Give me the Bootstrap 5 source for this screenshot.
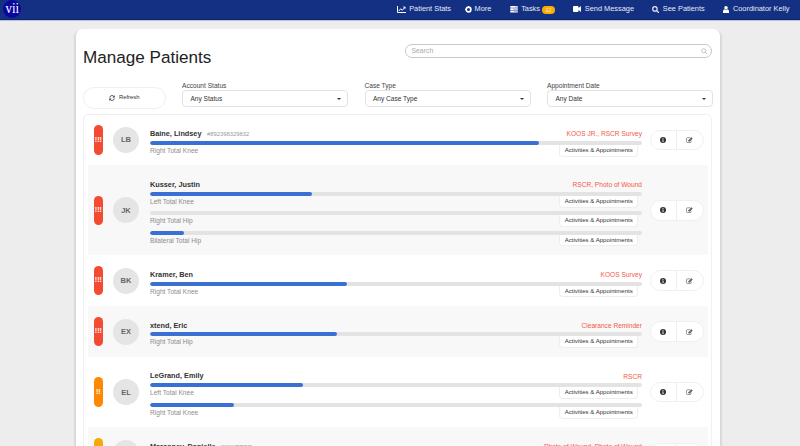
<!DOCTYPE html>
<html lang="en">
<head>
<meta charset="utf-8">
<meta name="viewport" content="width=device-width, initial-scale=1">
<title>Manage Patients</title>
<link href="https://cdn.jsdelivr.net/npm/bootstrap@5.3.0/dist/css/bootstrap.min.css" rel="stylesheet">
<style>
html,body{height:100%;overflow:hidden}
body{background:#ededed;font-family:"Liberation Sans",Arial,sans-serif;font-size:6.5px;line-height:1.2;color:#333}
svg{display:block;flex:none}
.topbar{height:21px;background:#143082;border-bottom:1px solid #b9c1da;box-shadow:inset 0 -1px #0c2470;padding:0 10.5px 1.5px 3px}
.topbar a{color:#e6eaf5;font-size:7.38px;text-decoration:none;white-space:nowrap;gap:3.5px;margin-left:18.3px}
.topbar a.nav-more{margin-left:13.5px;gap:3px}
.topbar a.nav-user{margin-left:18.8px}
.topbar .count{background:#fbab0a;color:#ffe9b8;font-size:5.6px;font-weight:400;width:13px;height:8.5px;margin-left:-1.5px;margin-top:1px;line-height:8.5px;padding:0}
.sheet{width:644px;height:417px;overflow:hidden;background:#fff;border-radius:7px 7px 0 0;padding:0 8px}
.sheet-shadow{width:644px;margin:8px 0 0 76px;border-radius:7px 7px 0 0;box-shadow:-2px 1px 1px #dadada,2px 1px 1px #dadada}
.title-row{height:52.500px;padding-top:15px}
.title-row h1{font-size:17.1px;line-height:20px;padding-top:4px;margin-left:-1px;color:#222;font-weight:400}
.search-box{width:307px;height:14px;border:1px solid #c8c8c8;border-radius:8px;color:#aaa;font-size:6.9px;padding:0 4px 0 5px;margin-right:-.4px}
.filters{height:32px}
.refresh{width:82.5px;height:21.5px;border:1px solid #f0f0f0;border-radius:11px;font-size:5.9px;margin:5.500px 16.5px 0 -1px;color:#333;gap:4px;flex:none}
.pick{width:166px;margin-right:16.5px;flex:none}
.pick label{font-size:6.6px;line-height:8px;color:#444;display:block;margin-bottom:.5px}
.pick .field{height:17px;border:1px solid #e2e2e2;border-radius:4px;padding:0 6px 0 7.5px;font-size:6.55px;color:#333}
.caret{border:2px solid transparent;border-top:2.6px solid #333;border-bottom:0}
.roster{width:629px;margin-left:-1px;height:400px;border:1px solid #f0f0f0;border-radius:5px;padding:0 3.5px}
.patient{padding:0 3.8px 0 6.2px}
.patient:nth-child(even){background:#f8f8f8}
.flagpill{width:9.3px;height:29.5px;border-radius:5px;background:#f34b31;color:#fff;font-weight:700;font-size:7px;margin-right:10px;flex:none}
.flagpill.mid{background:#ff8803}.flagpill.low{background:#f7a908}
.face{width:26px;height:26px;border-radius:50%;background:#e5e5e5;color:#666;font-weight:700;font-size:7.5px;margin-right:11px;flex:none}
.detail{width:492px;flex:none;padding-top:13.4px;margin-right:7.600px;align-self:stretch}
.who{height:13px}
.who b{font-size:7.3px;color:#333}
.who span{font-size:5.85px;color:#999;margin-left:5.5px}
.who em{font-style:normal;font-size:6.6px;color:#f25a45}
.track{height:4px;border-radius:2px;background:#e3e3e3;overflow:hidden}
.fill{height:4px;background:#3a6fd3;border-radius:2px}
.joint{height:15.45px;color:#8c8c8c;font-size:6.6px;line-height:11px;padding-right:3.5px}
.acts{width:79.5px;height:11.8px;border:1px solid #eee;border-top:0;border-radius:0 0 4px 4px;background:#fff;color:#333;font-size:6.07px;line-height:11.2px}
.duo{width:54px;height:20.5px;border:1px solid #f0f0f0;border-radius:11px;background:#fff;flex:none}
.duo span+span{border-left:1px solid #eee}
</style>
</head>
<body>
<svg width="0" height="0" class="position-absolute">
<symbol id="info" viewBox="0 0 12 12"><circle cx="6" cy="6" r="6" fill="#333"/><path d="M4.500 5h2.400v3.700h.8v1H4.400v-1h.8V6h-.7zM5.200 2.200h1.600v1.600H5.200z" fill="#fff"/></symbol>
<symbol id="edit" viewBox="0 0 14 12"><path d="M10.500 7.500V9a2 2 0 0 1-2 2H3a2 2 0 0 1-2-2V3.500a2 2 0 0 1 2-2h5.500" fill="none" stroke="#555" stroke-width="1.200"/><path d="M5 8.800V6.400L10.800.6l2.500 2.500-5.800 5.700z" fill="#444"/><path d="M6 7l1.200 1.100M7.200 6l3.500-3.500" stroke="#fff" stroke-width=".7"/></symbol>
<symbol id="glass" viewBox="0 0 12 12"><circle cx="5" cy="5" r="3.800" fill="none" stroke="currentColor" stroke-width="var(--w,2)"/><path d="M8 8l3.200 3.200" stroke="currentColor" stroke-width="var(--w,2)" stroke-linecap="round"/></symbol>
</svg>
<nav class="topbar d-flex align-items-center">
<svg width="18" height="18" viewBox="0 0 18 18"><circle cx="9" cy="9" r="9" fill="#0a07a0"/><text x="2.500" y="13.300" fill="#fff" font-family="Liberation Serif,serif" font-size="14" textLength="13.500" lengthAdjust="spacingAndGlyphs">vii</text></svg>
<div class="d-flex align-items-center ms-auto">
<a href="#" class="d-flex align-items-center"><svg width="9" height="7" viewBox="0 0 18 14"><path d="M1 0v13h17M3.500 10l4-4.500 3 3 5.500-6M12.500 2H16v3.500" fill="none" stroke="#fff" stroke-width="2"/></svg>Patient Stats</a>
<a href="#" class="d-flex align-items-center nav-more"><svg width="7" height="7" viewBox="0 0 14 14"><circle cx="7" cy="7" r="4.700" fill="none" stroke="#fff" stroke-width="3.400"/><path d="M7 0v14M0 7h14M2 2l10 10M12 2L2 12" stroke="#fff" stroke-width="2" stroke-dasharray="1.800 30"/></svg>More</a>
<a href="#" class="d-flex align-items-center"><svg width="8" height="6.500" viewBox="0 0 16 14"><path d="M0 0h16v4H0zM0 5h16v4H0zM0 10h16v4H0z" fill="#fff"/><path d="M10 2h5M6 7h9M8 12h7" stroke="#667bb0" stroke-width="1.300"/></svg>Tasks<span class="badge count rounded-pill">12</span></a>
<a href="#" class="d-flex align-items-center"><svg width="8" height="6" viewBox="0 0 16 12"><path d="M2 0h7a2 2 0 0 1 2 2v2l5-4v12l-5-4v2a2 2 0 0 1-2 2H2a2 2 0 0 1-2-2V2a2 2 0 0 1 2-2z" fill="#fff"/></svg>Send Message</a>
<a href="#" class="d-flex align-items-center"><svg width="7" height="7"><use href="#glass"/></svg>See Patients</a>
<a href="#" class="d-flex align-items-center nav-user"><svg width="6" height="7" viewBox="0 0 12 14"><circle cx="6" cy="3.600" r="3.500" fill="#fff"/><path d="M0 14V10.500Q0 7 3 6.500q3 2 6 0 3 .5 3 4V14z" fill="#fff"/></svg>Coordinator Kelly</a>
</div>
</nav>
<div class="sheet-shadow">
<main class="sheet">
<div class="title-row d-flex justify-content-between"><h1 class="mb-0">Manage Patients</h1>
<div class="search-box d-flex align-items-center justify-content-between">Search<svg width="6.500" height="6.500" style="--w:1.200"><use href="#glass"/></svg></div></div>
<div class="filters d-flex">
<div class="refresh d-flex align-items-center justify-content-center"><svg width="6" height="6" viewBox="0 0 12 12"><path d="M1.500 5A4.600 4.600 0 0 1 9.800 3M10.500 7A4.600 4.600 0 0 1 2.200 9" fill="none" stroke="#333" stroke-width="1.700"/><path d="M11.500.500V5H7zM.500 11.500V7H5z" fill="#333"/></svg>Refresh</div>
<div class="pick"><label>Account Status</label><div class="field d-flex align-items-center justify-content-between">Any Status<i class="caret"></i></div></div>
<div class="pick"><label>Case Type</label><div class="field d-flex align-items-center justify-content-between">Any Case Type<i class="caret"></i></div></div>
<div class="pick me-0"><label>Appointment Date</label><div class="field d-flex align-items-center justify-content-between">Any Date<i class="caret"></i></div></div>
</div>
<section class="roster" id="roster"></section>
</main>
</div>
<script src="https://cdn.jsdelivr.net/npm/bootstrap@5.3.0/dist/js/bootstrap.bundle.min.js"></script>
<script>
const patients = [
 {n:'Baine, Lindsey', id:'#892398329832', i:'LB', f:'!!!', a:'KOOS JR., RSCR Survey', j:[['Right Total Knee',79]]},
 {n:'Kusser, Justin', i:'JK', f:'!!!', a:'RSCR, Photo of Wound', j:[['Left Total Knee',33],['Right Total Hip',0],['Bilateral Total Hip',7]]},
 {n:'Kramer, Ben', i:'BK', f:'!!!', a:'KOOS Survey', j:[['Right Total Knee',40]]},
 {n:'xtend, Eric', i:'EX', f:'!!!', a:'Clearance Reminder', j:[['Right Total Hip',38]]},
 {n:'LeGrand, Emily', i:'EL', f:'!!', c:'mid', a:'RSCR', j:[['Left Total Knee',31],['Right Total Knee',17]]},
 {n:'Marconey, Danielle', id:'WKWERED', i:'', f:'', c:'low', a:'Photo of Wound, Photo of Wound', j:[]}
];
const joint = ([t, w]) => `<div class="track"><div class="fill" style="width:${w}%"></div></div><div class="joint d-flex justify-content-between">${t}<div class="acts text-center">Activities &amp; Appointments</div></div>`;
const height = p => 50.9 + 19.45 * (Math.max(p.j.length, 1) - 1);
document.getElementById('roster').innerHTML = patients.map(p => `
<article class="patient d-flex align-items-center" style="height:${height(p)}px">
<div class="flagpill ${p.c || ''} d-flex align-items-center justify-content-center">${p.f}</div>
<div class="face d-flex align-items-center justify-content-center">${p.i}</div>
<div class="detail"><div class="who d-flex align-items-center"><b>${p.n}</b>${p.id ? `<span>${p.id}</span>` : ''}<em class="ms-auto">${p.a}</em></div>
${p.j.map(joint).join('')}</div>
<div class="duo d-flex"><span class="flex-fill d-flex align-items-center justify-content-center"><svg width="6" height="6"><use href="#info"/></svg></span><span class="flex-fill d-flex align-items-center justify-content-center"><svg width="7" height="6"><use href="#edit"/></svg></span></div>
</article>`).join('');
</script>
</body>
</html>
